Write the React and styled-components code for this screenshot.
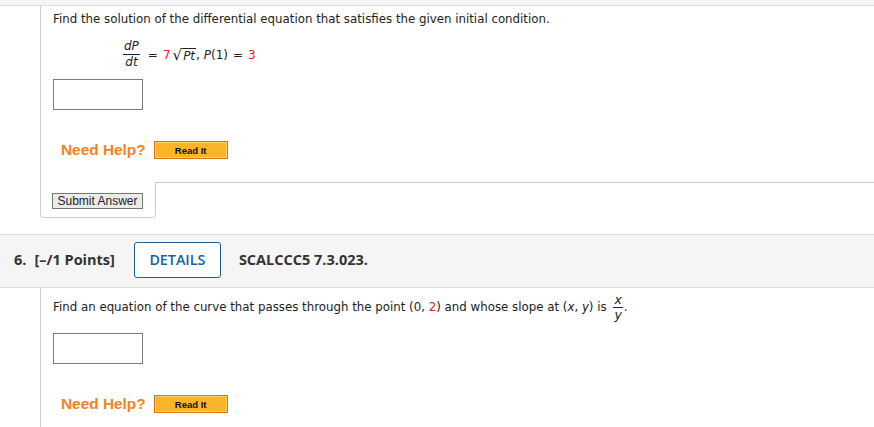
import React from 'react';
import styled, { createGlobalStyle } from 'styled-components';

const GlobalStyle = createGlobalStyle`
  html, body {
    margin: 0;
    padding: 0;
    background: #fff;
  }
  body {
    width: 874px;
    overflow: hidden;
  }
`;

export default function App() {
  return (
    <>
      <GlobalStyle />
      <Page>
        <TopStrip />
        <QuestionBody $pad="23px">
          <Prompt $top="6px">
            Find the solution of the differential equation that satisfies the given initial condition.
          </Prompt>
          <Equation>
            <Fraction>
              <Num>dP</Num>
              <Den>dt</Den>
            </Fraction>
            <Op>=</Op>
            <Red>7</Red>
            <Radical>
              <RootSign>√</RootSign>
              <Radicand>Pt</Radicand>
            </Radical>
            <span>, </span>
            <Var>P</Var>
            <span>(1)</span>
            <Op>=</Op>
            <Red>3</Red>
          </Equation>
          <AnswerBox $top="10px" />
          <HelpRow>
            <NeedHelp>Need Help?</NeedHelp>
            <ReadIt type="button">Read It</ReadIt>
          </HelpRow>
        </QuestionBody>
        <SubmitRow>
          <SubmitTab>
            <SubmitButton type="button">Submit Answer</SubmitButton>
          </SubmitTab>
          <SubmitLine />
        </SubmitRow>

        <QuestionHeader>
          <Number>6.</Number>
          <Points>[–/1 Points]</Points>
          <DetailsButton type="button">DETAILS</DetailsButton>
          <Code>SCALCCC5 7.3.023.</Code>
        </QuestionHeader>
        <QuestionBody $pad="40px">
          <Prompt $top="12px">
            Find an equation of the curve that passes through the point (0, <Red>2</Red>) and whose slope at (
            <Var>x</Var>, <Var>y</Var>) is{' '}
            <InlineFraction>
              <Num>x</Num>
              <Den>y</Den>
            </InlineFraction>
            .
          </Prompt>
          <AnswerBox $top="19px" />
          <HelpRow>
            <NeedHelp>Need Help?</NeedHelp>
            <ReadIt type="button">Read It</ReadIt>
          </HelpRow>
        </QuestionBody>
      </Page>
    </>
  );
}

const Page = styled.div`
  width: 874px;
  height: 427px;
  overflow: hidden;
  font-family: 'DejaVu Sans', Verdana, sans-serif;
  color: #222;
`;

const TopStrip = styled.div`
  height: 5px;
  background: #f5f5f5;
  border-bottom: 1px solid #ddd;
`;

const QuestionBody = styled.div`
  margin-left: 40px;
  border-left: 1px solid #ccc;
  padding: 0 0 ${(p) => p.$pad} 12px;
  display: flex;
  flex-direction: column;
  align-items: flex-start;
`;

const Prompt = styled.div`
  font-size: 11.8px;
  line-height: 14px;
  margin-top: ${(p) => p.$top};
  white-space: nowrap;
`;

const Red = styled.span`
  color: #ee1c24;
`;

const Var = styled.span`
  font-style: italic;
`;

const Equation = styled.div`
  display: flex;
  align-items: center;
  font-size: 12px;
  margin-top: 14px;
  margin-left: 70px;
  white-space: pre;
`;

const Op = styled.span`
  margin: 0 5px;
`;

const Fraction = styled.span`
  display: inline-flex;
  flex-direction: column;
  align-items: stretch;
  text-align: center;
  font-style: italic;
  line-height: 13px;
  margin-right: 3px;
`;

const InlineFraction = styled(Fraction)`
  vertical-align: middle;
  margin: -8px 1px -8px 3px;
  font-size: 12.5px;
  line-height: 12px;
`;

const Num = styled.span`
  padding: 0 1px 1px;
  border-bottom: 1px solid #222;
`;

const Den = styled.span`
  padding: 1px 1px 0;
`;

const Radical = styled.span`
  display: inline-flex;
  align-items: flex-end;
  margin-left: 2px;
`;

const RootSign = styled.span`
  font-style: normal;
  font-size: 15px;
  line-height: 16px;
`;

const Radicand = styled.span`
  font-style: italic;
  border-top: 1px solid #222;
  line-height: 14px;
  padding: 0 1px;
`;

const AnswerBox = styled.div`
  width: 88px;
  height: 29px;
  border: 1px solid #7a7a7a;
  margin-top: ${(p) => p.$top};
`;

const HelpRow = styled.div`
  display: flex;
  align-items: center;
  gap: 8px;
  height: 18px;
  margin-top: 31px;
  margin-left: 8px;
`;

const NeedHelp = styled.span`
  font-family: 'Liberation Sans', Arial, sans-serif;
  font-weight: bold;
  font-size: 15.4px;
  color: #f5821f;
`;

const ReadIt = styled.button`
  width: 74px;
  height: 18px;
  padding: 0;
  border: 1px solid #d9750c;
  box-shadow: inset 0 0 0 1px #ffd36b;
  background: #fcb529;
  font-family: 'Liberation Sans', Arial, sans-serif;
  font-weight: bold;
  font-size: 9.5px;
  color: #111;
`;

const SubmitRow = styled.div`
  display: flex;
  margin-left: 40px;
`;

const SubmitTab = styled.div`
  width: 116px;
  height: 36px;
  border: 1px solid #ccc;
  border-top: none;
  border-radius: 0 0 4px 4px;
  padding: 11px 0 0 11px;
  box-sizing: border-box;
`;

const SubmitLine = styled.div`
  flex: 1;
  border-top: 1px solid #ccc;
`;

const SubmitButton = styled.button`
  display: block;
  height: 16px;
  width: 91px;
  padding: 0;
  border: 1px solid #777;
  background: #ebebeb;
  font-family: 'Liberation Sans', Arial, sans-serif;
  font-size: 12px;
  line-height: 14px;
  color: #222;
`;

const QuestionHeader = styled.div`
  margin-top: 16px;
  box-sizing: border-box;
  height: 54px;
  padding: 0 0 3px 14px;
  background: #f5f5f5;
  border-top: 1px solid #ddd;
  border-bottom: 1px solid #ddd;
  display: flex;
  align-items: center;
  font-family: 'Open Sans', sans-serif;
  font-weight: bold;
  font-size: 14.5px;
  color: #333;
`;

const Number = styled.span`
  margin-right: 8px;
`;

const Points = styled.span``;

const DetailsButton = styled.button`
  margin-left: 19px;
  width: 87px;
  height: 36px;
  border: 1px solid #1f5f94;
  border-radius: 3px;
  background: #fff;
  font-family: 'Open Sans', sans-serif;
  font-weight: 600;
  font-size: 14.3px;
  color: #14639f;
  padding: 0;
`;

const Code = styled.span`
  margin-left: 18px;
`;
